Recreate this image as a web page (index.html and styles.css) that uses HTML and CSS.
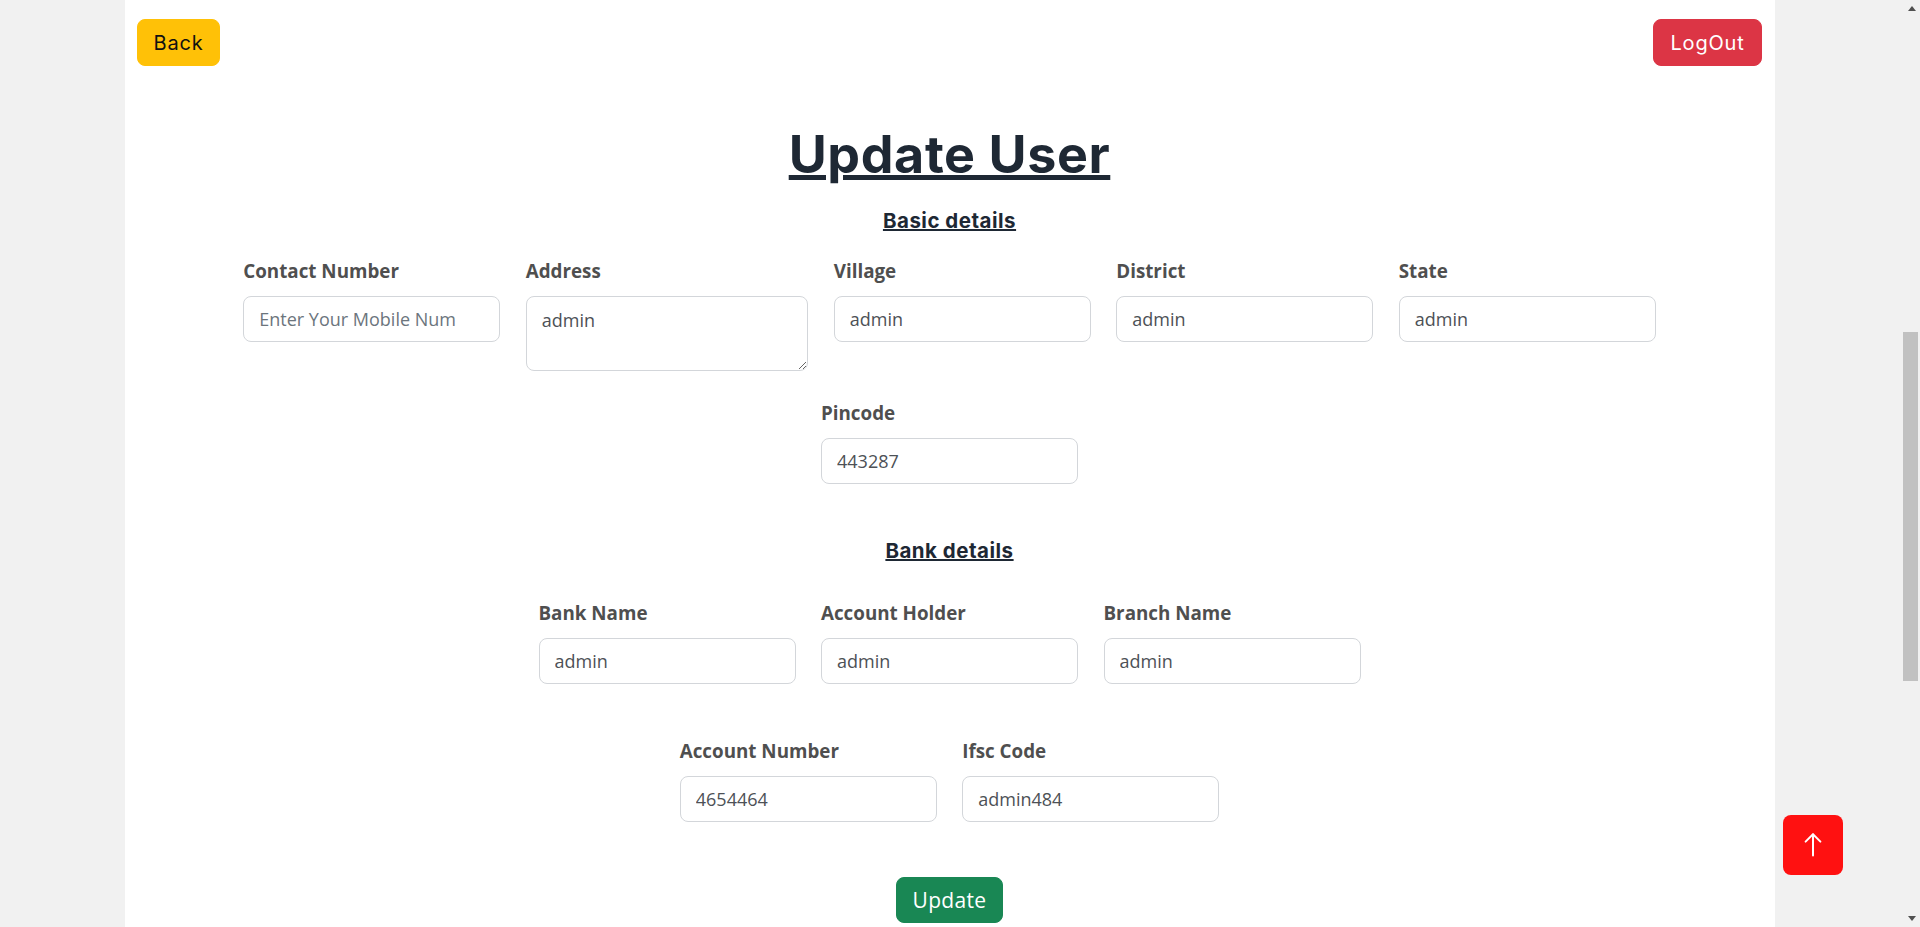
FILE: index.html
```html
<!DOCTYPE html>
<html lang="en">
<head>
<meta charset="utf-8">
<title>Update User</title>
<link rel="stylesheet" href="styles.css">
</head>
<body>
<div class="screen">
  <main class="viewport">
    <div class="container">
      <header class="topbar">
        <button class="btn btn-back" type="button">Back</button>
        <button class="btn btn-logout" type="button">LogOut</button>
      </header>
      <h1 class="title">Update User</h1>
      <form class="form">
        <h2 class="section-title section-basic">Basic details</h2>
        <div class="field-row row-basic">
          <div class="field">
            <label class="label">Contact Number</label>
            <input class="input" type="text" placeholder="Enter Your Mobile Num">
          </div>
          <div class="field field-wide">
            <label class="label">Address</label>
            <textarea class="input textarea">admin</textarea>
          </div>
          <div class="field">
            <label class="label">Village</label>
            <input class="input" type="text" value="admin">
          </div>
          <div class="field">
            <label class="label">District</label>
            <input class="input" type="text" value="admin">
          </div>
          <div class="field">
            <label class="label">State</label>
            <input class="input" type="text" value="admin">
          </div>
        </div>
        <div class="field-row row-pin">
          <div class="field">
            <label class="label">Pincode</label>
            <input class="input" type="text" value="443287">
          </div>
        </div>
        <h2 class="section-title section-bank">Bank details</h2>
        <div class="field-row row-bank">
          <div class="field">
            <label class="label">Bank Name</label>
            <input class="input" type="text" value="admin">
          </div>
          <div class="field">
            <label class="label">Account Holder</label>
            <input class="input" type="text" value="admin">
          </div>
          <div class="field">
            <label class="label">Branch Name</label>
            <input class="input" type="text" value="admin">
          </div>
        </div>
        <div class="field-row row-account">
          <div class="field">
            <label class="label">Account Number</label>
            <input class="input" type="text" value="4654464">
          </div>
          <div class="field">
            <label class="label">Ifsc Code</label>
            <input class="input" type="text" value="admin484">
          </div>
        </div>
        <div class="actions">
          <button class="btn btn-update" type="button">Update</button>
        </div>
      </form>
    </div>
  </main>
  <div class="scrollbar" aria-hidden="true">
    <div class="sb-btn sb-up"></div>
    <div class="sb-track"><div class="sb-thumb"></div></div>
    <div class="sb-btn sb-down"></div>
  </div>
</div>
<button class="to-top" type="button" aria-label="Scroll to top">
  <svg width="60" height="60" viewBox="0 0 60 60" fill="none" stroke="#fff" stroke-width="2" stroke-linecap="round" stroke-linejoin="round">
    <path d="M30 19.5V40.5"/>
    <path d="M22.6 26.6L30 19.3L37.4 26.6"/>
  </svg>
</button>
</body>
</html>
```

FILE: styles.css
```css
* {
  box-sizing: border-box;
}

html, body {
  margin: 0;
  padding: 0;
}

body {
  background: #f1f1f1;
  font-family: "Open Sans", "Noto Sans", sans-serif;
  color: #212529;
}

.screen {
  display: flex;
  height: 100vh;
  overflow: hidden;
}

.viewport {
  flex: 1;
  display: flex;
  padding: 0 128px 0 125px;
  overflow: hidden;
}

.container {
  flex: 1;
  background: #ffffff;
  padding: 19px 13px 0 12px;
  min-height: 100%;
}

.topbar {
  display: flex;
  justify-content: space-between;
  align-items: center;
}

.btn {
  display: inline-flex;
  align-items: center;
  justify-content: center;
  height: 47px;
  border: 1px solid transparent;
  border-radius: 8px;
  font-family: "Inter", "Open Sans", sans-serif;
  font-size: 20px;
  letter-spacing: 0.8px;
  padding: 0;
  cursor: pointer;
}

.btn-back {
  width: 83px;
  background: #ffc107;
  border-color: #ffc107;
  color: #111;
}

.btn-logout {
  width: 109px;
  background: #dc3545;
  border-color: #dc3545;
  color: #fff;
}

.title {
  margin: 58px 0 0;
  text-align: center;
  font-family: "Inter", "Open Sans", sans-serif;
  font-weight: 700;
  font-size: 52px;
  line-height: 62px;
  letter-spacing: 0.6px;
  color: #1e2834;
  text-decoration: underline;
  text-decoration-thickness: 4.5px;
  text-underline-offset: 2px;
}

.form {
  display: flex;
  flex-direction: column;
  align-items: center;
}

.section-title {
  margin: 0;
  font-family: "Inter", "Open Sans", sans-serif;
  font-weight: 700;
  font-size: 20.5px;
  line-height: 25px;
  letter-spacing: 0.5px;
  color: #1e2834;
  text-decoration: underline;
  text-decoration-thickness: 2px;
  text-underline-offset: 1px;
}

.section-basic {
  margin-top: 22px;
  margin-bottom: 23.5px;
}

.section-bank {
  margin-top: 54px;
  margin-bottom: 36.5px;
}

.field-row {
  display: flex;
  justify-content: center;
  align-items: flex-start;
  gap: 25.5px;
}

.row-basic {
  margin-bottom: 27.5px;
}

.row-bank {
  margin-bottom: 52.5px;
}

.field {
  display: flex;
  flex-direction: column;
  width: 257px;
}

.field-wide {
  width: 282.5px;
}

.label {
  font-family: "Open Sans", "Noto Sans", sans-serif;
  font-weight: 700;
  font-size: 18.8px;
  line-height: 28px;
  color: #4f4f4f;
  margin-bottom: 11px;
}

.input {
  display: block;
  width: 100%;
  height: 46px;
  padding: 0 15px;
  border: 1px solid #d3d6da;
  border-radius: 8px;
  background: #fff;
  font-family: "Open Sans", "Noto Sans", sans-serif;
  font-size: 18px;
  color: #4d5156;
  outline: none;
}

.input::placeholder {
  color: #6c757d;
  opacity: 1;
}

.textarea {
  height: 75.5px;
  padding: 10.5px 15px 6px;
  line-height: 27px;
  resize: vertical;
}

.actions {
  margin-top: 55.5px;
  display: flex;
  justify-content: center;
}

.btn-update {
  width: 106.5px;
  height: 46px;
  background: #198754;
  border-color: #198754;
  color: #fff;
  font-family: "Open Sans", "Noto Sans", sans-serif;
  font-size: 21px;
  letter-spacing: 0.3px;
}

/* fake browser scrollbar column */
.scrollbar {
  flex: none;
  width: 17px;
  display: flex;
  flex-direction: column;
  background: #f1f1f1;
}

.sb-btn {
  flex: none;
  height: 17px;
  display: flex;
  align-items: center;
  justify-content: center;
}

.sb-up::before,
.sb-down::before {
  content: "";
  width: 0;
  height: 0;
  border-left: 4.5px solid transparent;
  border-right: 4.5px solid transparent;
}

.sb-up::before {
  border-bottom: 5px solid #505050;
}

.sb-down::before {
  border-top: 5px solid #505050;
}

.sb-track {
  flex: 1;
  padding-top: 315px;
}

.sb-thumb {
  width: 15px;
  height: 349px;
  background: #c1c1c1;
}

.to-top {
  position: fixed;
  right: 77px;
  bottom: 52px;
  width: 60px;
  height: 60px;
  padding: 0;
  border: none;
  border-radius: 8px;
  background: #ff1111;
  display: flex;
  align-items: center;
  justify-content: center;
  cursor: pointer;
}

.to-top svg {
  display: block;
}
```
